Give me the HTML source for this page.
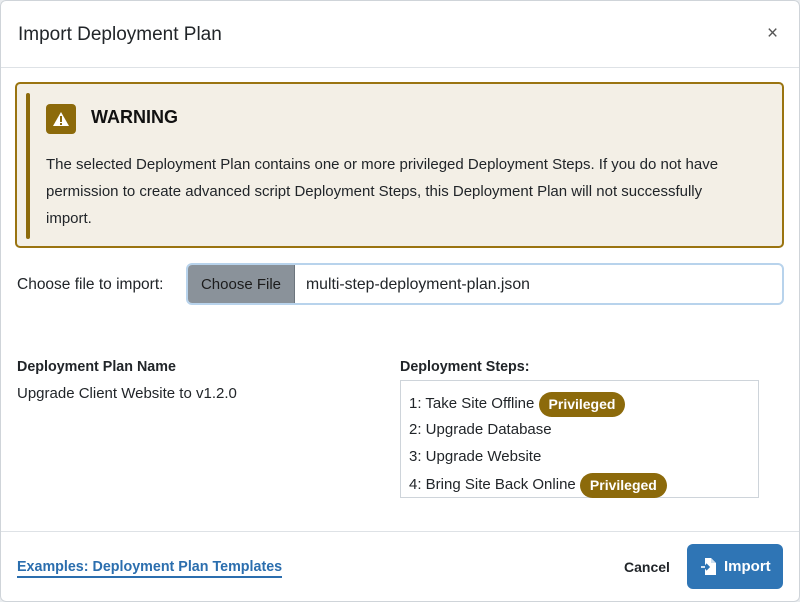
<!DOCTYPE html>
<html><head><style>
*{box-sizing:border-box;margin:0;padding:0}
body{width:800px;height:602px;background:#e9ecef;font-family:"Liberation Sans",sans-serif;color:#212529;position:relative;overflow:hidden}
.m{position:absolute;left:0;top:0;width:800px;height:602px;background:#fff;box-shadow:inset 0 0 0 1px #cfd4d9;border-radius:6px}
.a{position:absolute;white-space:nowrap}
.hr{position:absolute;left:1px;width:798px;height:1px;background:#dee2e6}
.warn{position:absolute;left:15px;top:82px;width:769px;height:166px;background:#f3efe6;border:2px solid #9a7410;border-radius:5px}
.bar{position:absolute;left:9px;top:9px;width:4px;height:146px;background:#8c6a0b;border-radius:2px}
.ic{position:absolute;left:29px;top:20px;width:30px;height:30px;background:#8c6a0b;border-radius:4px}
.p{font-size:15px;line-height:27px}
.pill{display:inline-block;background:#8c6a0b;color:#fff;font-weight:bold;font-size:14px;padding:0 10px;border-radius:13px;line-height:25px;vertical-align:middle}
</style></head><body><div class="m">
<div class="a" style="left:18px;top:24px;font-size:19px">Import Deployment Plan</div>
<div class="a" style="left:767px;top:23px;font-size:19px;color:#555">×</div>
<div class="hr" style="top:67px"></div>
<div class="warn"><div class="bar"></div>
<div class="ic"><svg width="30" height="30" viewBox="0 0 30 30"><path d="M15 8 L23 22 L7 22 Z" fill="#fff"/><rect x="14" y="12" width="2" height="6" fill="#8c6a0b"/><rect x="14" y="19" width="2" height="2" fill="#8c6a0b"/></svg></div>
<div class="a" style="left:74px;top:23px;font-size:18px;font-weight:bold;color:#111">WARNING</div>
<div class="a p" style="left:29px;top:67px">The selected Deployment Plan contains one or more privileged Deployment Steps. If you do not have<br>permission to create advanced script Deployment Steps, this Deployment Plan will not successfully<br>import.</div>
</div>
<div class="a" style="left:17px;top:276px;font-size:15.5px">Choose file to import:</div>
<div class="a" style="left:186px;top:263px;width:598px;height:42px;border:2px solid #b8d3ec;border-radius:6px;background:#fff;overflow:hidden">
<div style="position:absolute;left:0;top:0;width:107px;height:38px;background:#8a929a;border-right:1px solid #6c757d;font-size:15px;line-height:40px;text-align:center;color:#1c1c1c">Choose File</div>
<div style="position:absolute;left:118px;top:0;font-size:15.8px;line-height:40px">multi-step-deployment-plan.json</div></div>
<div class="a" style="left:17px;top:359px;font-size:14.3px;font-weight:bold">Deployment Plan Name</div>
<div class="a" style="left:17px;top:385px;font-size:15px">Upgrade Client Website to v1.2.0</div>
<div class="a" style="left:400px;top:359px;font-size:14.3px;font-weight:bold">Deployment Steps:</div>
<div class="a" style="left:400px;top:380px;width:359px;height:118px;border:1px solid #ced4da"></div>
<div class="a" style="left:409px;top:389px;font-size:15px;line-height:29px">1: Take Site Offline <span class="pill">Privileged</span></div>
<div class="a" style="left:409px;top:421px;font-size:15px">2: Upgrade Database</div>
<div class="a" style="left:409px;top:448px;font-size:15px">3: Upgrade Website</div>
<div class="a" style="left:409px;top:470px;font-size:15px;line-height:29px">4: Bring Site Back Online <span class="pill">Privileged</span></div>
<div class="hr" style="top:531px"></div>
<div class="a" style="left:17px;top:559px;font-size:14.3px;font-weight:bold;color:#2b6eae;border-bottom:2px solid #2b6eae;padding-bottom:1px">Examples: Deployment Plan Templates</div>
<div class="a" style="left:624px;top:559px;font-size:14px;font-weight:bold">Cancel</div>
<div class="a" style="left:687px;top:544px;width:96px;height:45px;background:#2f75b5;border-radius:6px;color:#fff;font-weight:bold;font-size:15px;line-height:46px;padding-left:37px">Import
<svg style="position:absolute;left:13px;top:13px" width="18" height="19" viewBox="0 0 18 19"><path d="M5 1h6l5 5v12H5v-6h2v-4H5z" fill="#fff"/><path d="M11 1v5h5" fill="#cfe0f0"/><path d="M1 10h8M6 7l3 3-3 3" stroke="#2f75b5" stroke-width="1.6" fill="none"/><path d="M1 10h4" stroke="#fff" stroke-width="1.6"/></svg></div>
</div></body></html>
